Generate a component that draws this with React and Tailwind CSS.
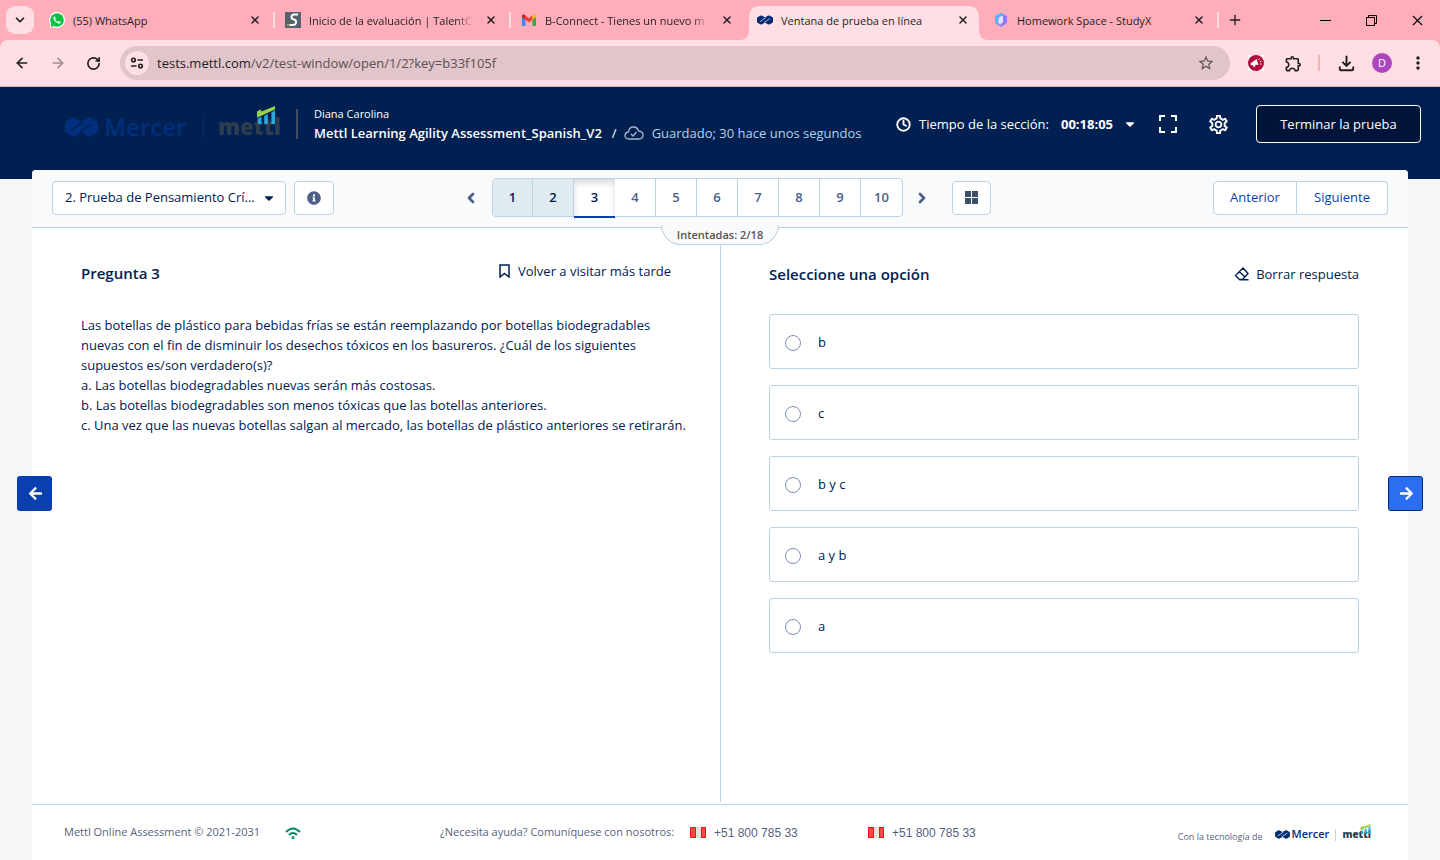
import { useState } from "react";
import {
  ArrowLeft,
  ArrowRight,
  ChevronDown,
  ChevronLeft,
  ChevronRight,
  Clock,
  Plus,
  RotateCw,
  X,
} from "lucide-react";
import {
  FaArrowLeft,
  FaArrowRight,
  FaCaretDown,
  FaInfoCircle,
} from "react-icons/fa";
import {
  MdMoreVert,
  MdOutlineExtension,
  MdOutlineFileDownload,
  MdOutlineSettings,
  MdStarOutline,
} from "react-icons/md";

const tabs = [
  { id: "whatsapp", title: "(55) WhatsApp" },
  { id: "talent", title: "Inicio de la evaluación | TalentC", long: true },
  { id: "gmail", title: "B-Connect - Tienes un nuevo m", long: true },
  { id: "mettl", title: "Ventana de prueba en línea", active: true },
  { id: "studyx", title: "Homework Space - StudyX" },
];

const questions = [1, 2, 3, 4, 5, 6, 7, 8, 9, 10];
const options = ["b", "c", "b y c", "a y b", "a"];

function MercerMark({ className }) {
  return (
    <svg viewBox="0 0 66 40" className={className} fill="currentColor" fillRule="evenodd" aria-hidden="true">
      <path d="M15 1 L18 1 L33 9 L48 1 L51 1 L64 9 L66 12 V28 L64 31 L51 39 L48 39 L33 31 L18 39 L15 39 L2 31 L0 28 V12 L2 9 Z M35 9 L11 26 L12 28 L37 11 Z M31 31 L55 14 L54 12 L29 29 Z" />
    </svg>
  );
}

function MettlBars({ className }) {
  return (
    <svg viewBox="0 0 22 20" className={className} aria-hidden="true">
      <path d="M1 6 L5 4 L6 6 L21 0 V4 L1 13 Z" fill="#97d04f" />
      <path d="M2 14 L6 12 V20 H2 Z M9 11 L13 9 V20 H9 Z M17 7 L21 5 V20 H17 Z" fill="#29a9e0" />
    </svg>
  );
}

function Favicon({ id }) {
  if (id === "whatsapp") {
    return (
      <svg viewBox="0 0 16 16" className="size-4 shrink-0">
        <path d="M8 0 a8 8 0 1 1 -3.6 15.1 L0.6 16 L1.3 12.2 A8 8 0 0 1 8 0 Z" fill="#fff" />
        <circle cx="8" cy="8" r="6.8" fill="#0ac143" />
        <path d="M1.6 15 L2.4 11 L5 14 Z" fill="#0ac143" />
        <path
          d="M5.6 4.2 c-.9.3-1.4 1.3-1.1 2.4 .7 2.5 2.6 4.4 5 5 1.1.3 2.1-.3 2.3-1.3 l-1.9-1.2 -1 .9 C7.5 9.4 6.6 8.5 6.1 7.3 l.8-.9 Z"
          fill="#fff"
        />
      </svg>
    );
  }
  if (id === "talent") {
    return (
      <svg viewBox="0 0 16 16" className="size-4 shrink-0">
        <rect width="16" height="16" fill="#54636b" />
        <path
          d="M13 2.5 H9 Q6.5 2.5 6.5 5 Q6.5 7.2 9 7.5 Q11.5 8 11 10.5 Q10.5 13 8 13 H4.5"
          fill="none"
          stroke="#fff"
          strokeWidth="2"
        />
        <rect x="2" y="12" width="2" height="2" fill="#7ab55c" />
      </svg>
    );
  }
  if (id === "gmail") {
    return (
      <svg viewBox="0 0 16 16" className="size-4 shrink-0">
        <path d="M1 4 L4.5 6.5 V14 H2 Q1 14 1 13 Z" fill="#4285f4" />
        <path d="M15 4 L11.5 6.5 V14 H14 Q15 14 15 13 Z" fill="#34a853" />
        <path d="M4.5 3.5 L8 6.2 L11.5 3.5 V7.8 L8 10.5 L4.5 7.8 Z" fill="#ea4335" />
        <path d="M1 4 Q1 2 3 2.4 L4.5 3.5 V7.8 L1 5.2 Z" fill="#c5221f" />
        <path d="M15 4 Q15 2 13 2.4 L11.5 3.5 V7.8 L15 5.2 Z" fill="#fbbc04" />
      </svg>
    );
  }
  if (id === "mettl") {
    return <MercerMark className="w-4 h-[10px] shrink-0 text-[#002c77]" />;
  }
  return (
    <svg viewBox="0 0 16 16" className="size-4 shrink-0">
      <path d="M8 1 L14 4 V11 L8 15 L2 11 V4 Z" fill="#8c7bff" />
      <path d="M8 1 L2 4 V11 L5 13 V5 L10 2 Z" fill="#35c8f5" />
      <path d="M6 5 L10 3.5 V10 L7 13 L5 10 Z" fill="#d9e6ff" />
    </svg>
  );
}

function Tab({ tab }) {
  const titleClass = tab.long
    ? "flex-1 pt-0.5 whitespace-nowrap [mask-image:linear-gradient(to_right,#000_90%,transparent)]"
    : "flex-1 pt-0.5 whitespace-nowrap";

  if (tab.active) {
    return (
      <div className="relative w-[230px] mx-[3px] mt-[6px] h-[34px] pl-2 pr-[10px] pb-[6px] flex items-center gap-2 bg-[#ffdee4] rounded-t-[10px]">
        <svg viewBox="0 0 10 10" className="absolute -left-[10px] bottom-0 size-[10px]">
          <path d="M10 0 V10 H0 Q10 10 10 0 Z" fill="#ffdee4" />
        </svg>
        <svg viewBox="0 0 10 10" className="absolute -right-[10px] bottom-0 size-[10px]">
          <path d="M0 0 V10 H10 Q0 10 0 0 Z" fill="#ffdee4" />
        </svg>
        <Favicon id={tab.id} />
        <span className={titleClass}>{tab.title}</span>
        <button aria-label="Cerrar pestaña"><X size={12} strokeWidth={3} /></button>
      </div>
    );
  }

  return (
    <div className="w-[236px] h-10 pl-[11px] pr-[13px] flex items-center gap-2">
      <Favicon id={tab.id} />
      <span className={titleClass}>{tab.title}</span>
      <button className="ml-1" aria-label="Cerrar pestaña"><X size={12} strokeWidth={3} /></button>
    </div>
  );
}

function TabDivider({ hidden }) {
  return <div className={hidden ? "w-0.5 -mx-px h-4" : "w-0.5 -mx-px h-4 bg-[#ffdee4]"} />;
}

function Browser() {
  return (
    <div className="bg-[#ffacbb] text-[#1f1f1f]">
      <div className="h-10 flex items-center text-[11px]">
        <button className="ml-[6px] mr-1 size-7 rounded-[9px] bg-[#ffdee4] flex items-center justify-center" aria-label="Buscar pestañas">
          <ChevronDown size={14} strokeWidth={3} />
        </button>
        {tabs.map((tab, i) => (
          <div key={tab.id} className="flex items-center">
            <Tab tab={tab} />
            <TabDivider hidden={i === 2 || i === 3} />
          </div>
        ))}
        <button className="ml-[9px]" aria-label="Nueva pestaña"><Plus size={16} strokeWidth={2} /></button>
        <div className="ml-auto flex text-black">
          <button className="w-[46px] flex items-center justify-center" aria-label="Minimizar">
            <svg viewBox="0 0 11 11" className="size-[11px]" stroke="currentColor">
              <path d="M0 5.5 H11" />
            </svg>
          </button>
          <button className="w-[46px] flex items-center justify-center" aria-label="Restaurar">
            <svg viewBox="0 0 11 11" className="size-[11px]" fill="none" stroke="currentColor">
              <path d="M0.5 2.5 H8.5 V10.5 H0.5 Z M2.5 2.5 V0.5 H10.5 V8.5 H8.5" />
            </svg>
          </button>
          <button className="w-[46px] flex items-center justify-center" aria-label="Cerrar"><X size={17} strokeWidth={1.5} /></button>
        </div>
      </div>

      <div className="h-[47px] border-b border-[#cdb9c0] bg-[#ffdee4] rounded-t-[8px] pl-[14px] pr-3 flex items-center">
        <button aria-label="Atrás"><ArrowLeft size={16} strokeWidth={2.4} /></button>
        <button className="ml-5 text-[#a3898e]" aria-label="Adelante"><ArrowRight size={16} strokeWidth={2.4} /></button>
        <button className="ml-5" aria-label="Recargar"><RotateCw size={15} strokeWidth={2.6} /></button>
        <div className="ml-[19px] flex-1 h-[34px] rounded-full bg-[#e1c5ca] pl-[5px] pr-[15px] flex items-center">
          <button className="size-6 rounded-full bg-[#ffdee4] flex items-center justify-center" aria-label="Información del sitio">
            <svg viewBox="0 0 14 14" className="size-[14px]" fill="none" stroke="currentColor" strokeWidth="1.6">
              <circle cx="3.5" cy="4" r="1.8" />
              <path d="M7.5 4 H13 M1 10 H6.5" />
              <circle cx="10.5" cy="10" r="1.8" />
            </svg>
          </button>
          <p className="ml-2 pt-0.5 flex-1 text-[13px] text-[#5d5053]">
            <span className="text-[#1f1f1f]">tests.mettl.com</span>/v2/test-window/open/1/2?key=b33f105f
          </p>
          <button aria-label="Agregar a favoritos"><MdStarOutline size={18} className="text-[#5d5456]" /></button>
        </div>
        <button className="ml-[18px] size-4 bg-white" aria-label="Extensión">
          <svg viewBox="0 0 16 16" className="size-4">
            <circle cx="8" cy="8" r="8" fill="#b3093c" />
            <path d="M2.5 8.5 L8.5 4 L10.5 10 L7.5 9.8 L7 12 L5 11.5 V10 L3 10.5 Z" fill="#fff" />
            <path d="M10.5 5 L11.5 3.5 M11.8 7 L13.2 6.2 M12 9 H13.5" stroke="#fff" />
          </svg>
        </button>
        <button className="ml-5" aria-label="Extensiones"><MdOutlineExtension size={19} /></button>
        <div className="ml-[15px] w-0.5 h-4 bg-[#ffacbb]" />
        <button className="ml-[15px]" aria-label="Descargas"><MdOutlineFileDownload size={23} /></button>
        <button className="ml-[14px] size-5 rounded-full bg-[#aa47bc] text-white text-[11px] leading-5" aria-label="Perfil">D</button>
        <button className="ml-4" aria-label="Menú"><MdMoreVert size={20} /></button>
      </div>
    </div>
  );
}

function Header() {
  return (
    <header className="h-[92px] bg-[#002052] text-white flex items-start">
      <div className="ml-[65px] mt-[22px] h-[30px] flex items-center">
        <MercerMark className="w-[33px] h-5 mt-[6px] text-[#002f7d]" />
        <span className="ml-[6px] mt-[6px] w-[84px] text-[24px] leading-6 font-semibold text-[#002f7d]">Mercer</span>
        <div className="ml-[15px] mt-1 w-px h-6 bg-[#0b2d60]" />
        <div className="relative ml-[14px] mt-[6px] w-[62px]">
          <span className="text-[22px] leading-6 font-extrabold text-[#2d3d4f]">mettl</span>
          <MettlBars className="absolute left-[37px] -top-2 w-[22px] h-[18px]" />
        </div>
        <div className="ml-4 w-0.5 h-[30px] bg-[#414b5c]" />
      </div>
      <div className="ml-4 mt-[18px]">
        <p className="text-[11px] leading-[18px]">Diana Carolina</p>
        <div className="flex items-center text-[13px] leading-5">
          <h1 className="font-semibold">Mettl Learning Agility Assessment_Spanish_V2</h1>
          <span className="ml-[10px]">/</span>
          <svg viewBox="0 0 20 14" className="ml-[7px] w-5 h-[14px]" fill="none" stroke="#a9b9cb" strokeWidth="1.3">
            <path d="M5 13 Q1 13 1 9.5 Q1 6.5 4.5 6 Q5 1 9.5 1 Q13.5 1 14.5 5 Q19 5.5 19 9 Q19 13 15 13 Z" />
            <path d="M7 8 L9 10 L12.5 6" />
          </svg>
          <span className="ml-2 text-[#b5d3e8]">Guardado; 30 hace unos segundos</span>
        </div>
      </div>
      <div className="ml-auto mr-[19px] mt-[18px] h-[38px] flex items-center text-[13px]">
        <Clock size={15} strokeWidth={3} />
        <span className="ml-2 pt-0.5">Tiempo de la sección:</span>
        <strong className="ml-3 pt-0.5 font-bold">00:18:05</strong>
        <button className="ml-[10px]" aria-label="Ver tiempos"><FaCaretDown size={14} /></button>
        <button className="ml-[22px]" aria-label="Pantalla completa">
          <svg viewBox="0 0 18 18" className="size-[18px]" fill="none" stroke="currentColor" strokeWidth="2">
            <path d="M6 1 H1 V6 M12 1 H17 V6 M1 12 V17 H6 M17 12 V17 H12" />
          </svg>
        </button>
        <button className="ml-[30px]" aria-label="Configuración"><MdOutlineSettings size={23} /></button>
        <button className="ml-[26px] pt-0.5 w-[165px] h-[38px] rounded-[4px] border border-white bg-[#001439]">
          Terminar la prueba
        </button>
      </div>
    </header>
  );
}

function Toolbar({ current, setCurrent }) {
  return (
    <div className="relative h-[58px] px-5 pb-0.5 rounded-t-[4px] bg-[#f8fafc] border-b border-[#bcd3e3] grid grid-cols-[1fr_auto_1fr] items-center">
      <div className="flex gap-2">
        <div className="relative">
          <select
            aria-label="Sección"
            className="appearance-none w-[234px] h-[34px] pl-3 pr-7 rounded-[4px] border border-[#bcd3e3] bg-white text-[13px] text-[#002052]"
          >
            <option>2. Prueba de Pensamiento Crí...</option>
          </select>
          <FaCaretDown size={14} className="absolute right-[10px] top-[10px] pointer-events-none" />
        </div>
        <button className="w-10 h-[34px] rounded-[4px] border border-[#bcd3e3] bg-white flex items-center justify-center text-[#4c5f8b]" aria-label="Información">
          <FaInfoCircle size={14} />
        </button>
      </div>

      <div className="pl-[14px] flex items-center text-[#4c5f8b]">
        <button aria-label="Preguntas anteriores"><ChevronLeft size={16} strokeWidth={4} /></button>
        <div className="ml-[13px] flex h-[39px] rounded-[4px] border border-[#bcd3e3] bg-white text-[13px] font-semibold">
          {questions.map((n) => (
            <button
              key={n}
              onClick={() => setCurrent(n)}
              className={
                n === current
                  ? "w-[41px] h-[39px] border-b-2 border-[#0a3fb0] text-[#002052] shadow-[inset_0_4px_6px_rgba(0,0,0,0.15)]"
                  : n < 3
                    ? "w-[41px] first:w-10 border-r border-[#bcd3e3] bg-[#e0ebf1] text-[#002052]"
                    : "w-[41px] border-r border-[#bcd3e3] last:border-r-0"
              }
            >
              {n}
            </button>
          ))}
        </div>
        <button className="ml-[11px]" aria-label="Preguntas siguientes"><ChevronRight size={16} strokeWidth={4} /></button>
        <button className="ml-[22px] w-[39px] h-[34px] rounded-[4px] border border-[#bcd3e3] bg-white flex items-center justify-center" aria-label="Ver todas">
          <svg viewBox="0 0 13 13" className="size-[13px]" fill="#3d4f66">
            <path d="M0 0 H6 V6 H0 Z M7 0 H13 V6 H7 Z M0 7 H6 V13 H0 Z M7 7 H13 V13 H7 Z" />
          </svg>
        </button>
      </div>

      <div className="flex justify-end text-[13px] text-[#0a3fb0]">
        <button className="w-[84px] h-[34px] rounded-l-[4px] border border-[#bcd3e3] bg-white">Anterior</button>
        <button className="w-[91px] h-[34px] rounded-r-[4px] border border-l-0 border-[#bcd3e3] bg-white">Siguiente</button>
      </div>

      <div className="absolute left-1/2 -bottom-[18px] -translate-x-1/2 z-10 w-[118px] h-5 rounded-b-[20px] border border-t-0 border-[#bcd3e3] bg-[#f8fafc] text-center text-[11px] leading-5 font-semibold text-[#555]">
        Intentadas: 2/18
      </div>
    </div>
  );
}

function Flag() {
  return (
    <svg viewBox="0 0 16 11" className="w-4 h-[11px]" aria-hidden="true">
      <rect width="16" height="11" fill="#f3ddd8" />
      <path d="M0 0 H6 V11 H0 Z M11 0 H16 V11 H11 Z" fill="#f01414" />
      <path d="M1 1 H5 V10 H1 Z M12 1 H15 V10 H12 Z" fill="#ff4545" />
    </svg>
  );
}

function Footer() {
  return (
    <footer className="h-14 border-t border-[#bcd3e3] pl-8 pr-[37px] flex items-center text-[11px] text-[#565f7c]">
      <span className="w-[205px]">Mettl Online Assessment © 2021-2031</span>
      <svg viewBox="0 0 16 12" className="ml-4 w-4 h-3" fill="none" stroke="#0a8a5f" strokeWidth="2">
        <path d="M1 5 Q8 -2 15 5" />
        <path d="M4 8 Q8 4 12 8" />
        <circle cx="8" cy="10.5" r="0.6" />
      </svg>
      <span className="ml-[139px] w-[242px]">¿Necesita ayuda? Comuníquese con nosotros:</span>
      <div className="ml-2 flex items-center gap-2 font-['Liberation_Sans',Arial,sans-serif] text-[12px]">
        <Flag />
        <span className="w-[86px]">+51 800 785 33</span>
      </div>
      <div className="ml-[68px] flex items-center gap-2 font-['Liberation_Sans',Arial,sans-serif] text-[12px]">
        <Flag />
        <span className="w-[86px]">+51 800 785 33</span>
      </div>
      <span className="ml-auto mt-2 text-[9px]">Con la tecnología de</span>
      <MercerMark className="ml-3 mt-1 w-[15px] h-[9px] text-[#002c77]" />
      <span className="ml-0.5 mt-1 text-[11px] font-semibold text-[#002c77]">Mercer</span>
      <div className="ml-[6px] mt-1 w-px h-3 bg-[#c5d0e0]" />
      <div className="relative ml-[6px] mt-1">
        <span className="text-[10px] font-extrabold text-[#2d3d4f]">mettl</span>
        <MettlBars className="absolute right-0 -top-0.5 w-[11px] h-[10px]" />
      </div>
    </footer>
  );
}

export default function App() {
  const [current, setCurrent] = useState(3);
  const [answer, setAnswer] = useState(null);

  return (
    <div className="min-h-screen flex flex-col bg-[#f4f6f8] text-[#002052] font-['Open_Sans','Noto_Sans',sans-serif]">
      <Browser />
      <Header />

      <div className="relative flex-1 -mt-[9px] mx-8 bg-white rounded-t-[4px] flex flex-col">
        <Toolbar current={current} setCurrent={setCurrent} />

        <main className="flex-1 grid grid-cols-2 pb-0.5">
          <section>
            <div className="mt-[33px] px-[49px] flex items-start justify-between">
              <h2 className="text-[15px] leading-6 font-semibold">Pregunta {current}</h2>
              <button className="flex items-center gap-2 text-[13px] leading-5">
                <svg viewBox="0 0 11 14" className="w-[11px] h-[14px]" fill="none" stroke="currentColor" strokeWidth="1.5">
                  <path d="M1 1 H10 V13 L5.5 9.5 L1 13 Z" />
                </svg>
                Volver a visitar más tarde
              </button>
            </div>
            <div className="mt-[30px] pl-[49px] pr-7 text-[13px] leading-5">
              <p>
                Las botellas de plástico para bebidas frías se están reemplazando por botellas biodegradables
                nuevas con el fin de disminuir los desechos tóxicos en los basureros. ¿Cuál de los siguientes
                supuestos es/son verdadero(s)?
              </p>
              <p>a. Las botellas biodegradables nuevas serán más costosas.</p>
              <p>b. Las botellas biodegradables son menos tóxicas que las botellas anteriores.</p>
              <p>c. Una vez que las nuevas botellas salgan al mercado, las botellas de plástico anteriores se retirarán.</p>
            </div>
          </section>

          <section className="pl-12 pr-[49px] border-l border-[#bcd3e3]">
            <div className="mt-[34px] flex items-center justify-between">
              <h2 className="text-[15px] leading-6 font-semibold">Seleccione una opción</h2>
              <button className="flex items-center gap-[6px] text-[13px] leading-5">
                <svg viewBox="0 0 16 14" className="w-4 h-[14px]" fill="none" stroke="currentColor" strokeWidth="1.4">
                  <path d="M9 1 L14 6.5 L8.5 12.5 H5.5 L1.5 8.5 Z M5.5 4.8 L11 10 M5.5 12.8 H14.5" />
                </svg>
                Borrar respuesta
              </button>
            </div>
            <div className="mt-7 flex flex-col gap-4">
              {options.map((o) => (
                <label key={o} className="h-[55px] pl-[15px] pt-0.5 rounded-[3px] border border-[#bcd3e3] flex items-center text-[13px]">
                  <input
                    type="radio"
                    name="respuesta"
                    checked={answer === o}
                    onChange={() => setAnswer(o)}
                    className="appearance-none size-4 mr-[17px] rounded-full border border-[#7d90b2] checked:border-4"
                  />
                  {o}
                </label>
              ))}
            </div>
          </section>
        </main>

        <button className="absolute -left-[15px] top-[306px] size-[35px] pl-0.5 rounded-[3px] bg-[#0a3fb0] text-white flex items-center justify-center" aria-label="Anterior">
          <FaArrowLeft size={15} />
        </button>
        <button className="absolute -right-[15px] top-[306px] size-[35px] pl-0.5 rounded-[3px] border border-[#002c77] bg-[#2b6ef2] text-white flex items-center justify-center" aria-label="Siguiente">
          <FaArrowRight size={15} />
        </button>

        <Footer />
      </div>
    </div>
  );
}
